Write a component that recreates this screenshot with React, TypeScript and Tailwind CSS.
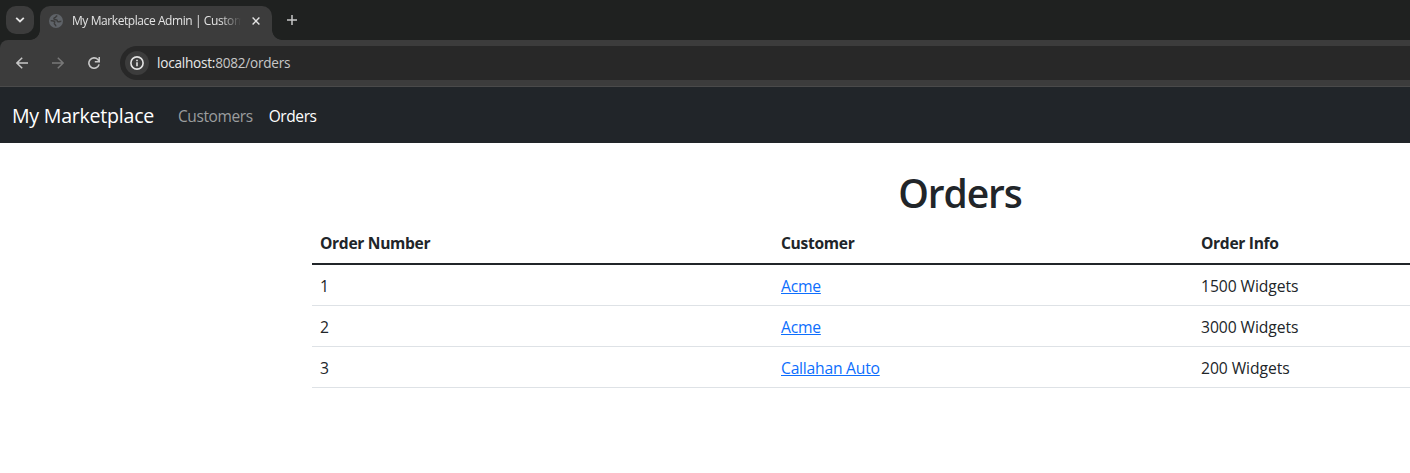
const orders = [
  { id: 1, customer: "Acme", info: "1500 Widgets" },
  { id: 2, customer: "Acme", info: "3000 Widgets" },
  { id: 3, customer: "Callahan Auto", info: "200 Widgets" },
];

function TabStrip() {
  return (
    <div className="flex h-10 items-start bg-[#1f2120] pl-1.5 pt-1.5">
      <button className="flex size-7 items-center justify-center rounded-[10px] bg-[#3c3c3c] text-[#e3e3e3]">
        <svg width="10" height="6" viewBox="0 0 10 6" fill="none" stroke="currentColor" strokeWidth="1.8">
          <path d="M1.2 0.8 5 4.5 8.8 0.8" />
        </svg>
      </button>
      <div className="relative ml-1.5 flex h-[34px] w-[232px] items-center rounded-t-[10px] bg-[#3c3c3c] pb-[5px] pl-[9px] pr-2.5">
        <span className="absolute -left-2.5 bottom-0 size-2.5 bg-[radial-gradient(circle_at_0_0,transparent_9.5px,#3c3c3c_10.2px)]" />
        <span className="absolute -right-2.5 bottom-0 size-2.5 bg-[radial-gradient(circle_at_100%_0,transparent_9.5px,#3c3c3c_10.2px)]" />
        <svg className="shrink-0" width="14" height="14" viewBox="0 0 14 14">
          <circle cx="7" cy="7" r="7" fill="#5f6368" />
          <path
            d="M8.3 1.7C6.6 2 7.2 3 6.2 3.5 5 4 4.6 4.4 5.2 5.2 5.9 6 7.4 5.3 8 6.1 8.5 6.9 7.9 7.5 9 7.8 10.2 8.1 11 7.3 12.3 7.2M1.7 6.8C3.2 6.6 4.8 6.9 5.6 7.6 6.2 8.3 5.1 8.9 5.4 9.8 5.8 10.7 6.9 10.8 6.7 12.3"
            fill="none"
            stroke="#3c3c3c"
            strokeWidth="1.5"
          />
        </svg>
        <span className="ml-[9px] w-[169px] overflow-hidden whitespace-nowrap text-[12px] leading-4 tracking-[-0.42px] text-[#e3e3e3] [mask-image:linear-gradient(90deg,#000_148px,transparent_169px)]">
          My Marketplace Admin | Customers
        </span>
        <svg className="ml-[11px] shrink-0" width="8" height="8" viewBox="0 0 8 8" stroke="#e3e3e3" strokeWidth="1.4">
          <path d="M0.6 0.6 7.4 7.4M7.4 0.6 0.6 7.4" />
        </svg>
      </div>
      <svg className="ml-[15px] mt-[9px]" width="10" height="10" viewBox="0 0 10 10" stroke="#c7c7c7" strokeWidth="1.5">
        <path d="M5 0V10M0 5H10" />
      </svg>
    </div>
  );
}

function Toolbar() {
  return (
    <div className="bg-[#1f2120]">
      <div className="flex h-[47px] items-start rounded-tl-lg border-b border-[#4a4a4a] bg-[#3c3c3c] pt-1.5">
        <div className="flex h-[34px] w-[120px] shrink-0 items-center pl-4">
          <svg width="12" height="12" viewBox="0 0 12 12" fill="none" stroke="#c7c7c7" strokeWidth="1.5">
            <path d="M12 6H1M6.2 0.7 0.9 6 6.2 11.3" />
          </svg>
          <svg className="ml-6" width="12" height="12" viewBox="0 0 12 12" fill="none" stroke="#787878" strokeWidth="1.5">
            <path d="M0 6H11M5.8 0.7 11.1 6 5.8 11.3" />
          </svg>
          <svg className="ml-6" width="12" height="12" viewBox="0 0 12 12" fill="none" stroke="#c7c7c7" strokeWidth="1.6">
            <path d="M11.1 7.4A5.2 5.2 0 1 1 9.9 2.5L11.2 4.4M11.3 0V4.7H6.8" />
          </svg>
        </div>
        <div className="flex h-[34px] grow items-center rounded-l-full bg-[#282828] pl-[5px]">
          <span className="flex size-6 items-center justify-center rounded-full bg-[#3c3c3c]">
            <svg width="14" height="14" viewBox="0 0 14 14" fill="none" stroke="#e3e3e3" strokeWidth="1.6">
              <circle cx="7" cy="7" r="6.1" />
              <path d="M7 6.3V10.3M7 3.7V5.2" />
            </svg>
          </span>
          <span className="ml-2 text-[13.6px] leading-5 tracking-[-0.24px] text-[#c7c7c7]">
            <span className="text-[#e8e8e8]">localhost:</span>8082/orders
          </span>
        </div>
      </div>
    </div>
  );
}

function Navbar() {
  return (
    <nav className="flex h-14 items-center bg-[#212529] pl-3">
      <a className="w-[158px] pt-0.5 text-[19.6px] leading-[30px] tracking-[-0.25px] text-white">My Marketplace</a>
      <a className="px-2 pt-px text-[15.5px] leading-6 tracking-[-0.4px] text-[#9b9d9e]">Customers</a>
      <a className="px-2 pt-px text-[15.5px] leading-6 tracking-[-0.4px] text-white">Orders</a>
    </nav>
  );
}

function OrdersTable() {
  return (
    <div className="w-[1296px] text-[15.7px] leading-6 tracking-[-0.24px]">
      <div className="grid h-10 grid-cols-[461px_420px_1fr] items-center border-b-2 border-[#212529] pb-[2px] text-[15.6px] font-bold tracking-[-0.32px]">
        <div className="px-2">Order Number</div>
        <div className="px-2">Customer</div>
        <div className="px-2">Order Info</div>
      </div>
      {orders.map((o) => (
        <div key={o.id} className="grid h-[41px] grid-cols-[461px_420px_1fr] items-center border-b border-[#dee2e6] pt-px">
          <div className="px-2">{o.id}</div>
          <div className="px-2">
            <a className="text-[#0d6efd] underline underline-offset-1">{o.customer}</a>
          </div>
          <div className="px-2 tracking-[-0.08px]">{o.info}</div>
        </div>
      ))}
    </div>
  );
}

export default function App() {
  return (
    <div className="h-[473px] w-[1410px] overflow-hidden bg-white font-['Open_Sans','Noto_Sans',sans-serif] text-[#212529]">
      <TabStrip />
      <Toolbar />
      <Navbar />
      <main className="ml-[312px] w-[1296px] pt-[26px]">
        <h1 className="mb-2 text-center text-[39px] font-[550] leading-[48px] tracking-[-1.1px]">Orders</h1>
        <OrdersTable />
      </main>
    </div>
  );
}
